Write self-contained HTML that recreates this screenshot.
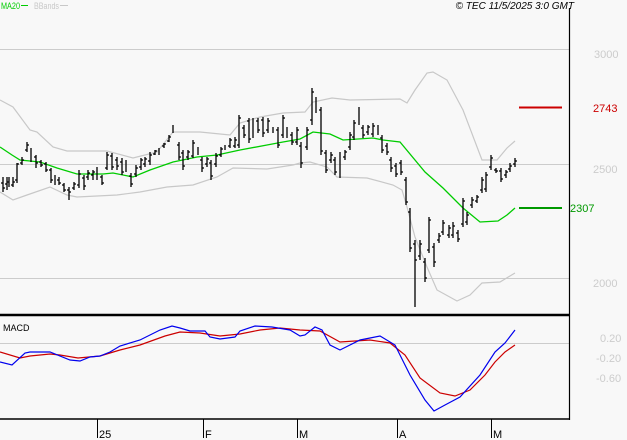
<!DOCTYPE html><html><head><meta charset="utf-8"><style>
body{margin:0;background:#f8f8f8;width:627px;height:440px;overflow:hidden;font-family:"Liberation Sans",sans-serif}
svg{display:block}
</style></head><body>
<svg width="627" height="440" viewBox="0 0 627 440" xmlns="http://www.w3.org/2000/svg">
<rect width="627" height="440" fill="#f8f8f8"/>
<g stroke="#cccccc" stroke-width="1">
<line x1="0" y1="49.5" x2="569" y2="49.5"/>
<line x1="0" y1="164.5" x2="569" y2="164.5"/>
<line x1="0" y1="278.5" x2="569" y2="278.5"/>
<line x1="0" y1="343.5" x2="569" y2="343.5"/>
</g>
<g fill="none" stroke="#c8c8c8" stroke-width="1.2">
<polyline points="0,100 13,107 30,130 37,132 53,147 67,151 107,151 133,158 157,152 173,132 200,132 230,135 240,123 260,117 283,113 305,112 313,102 332,98 350,100 400,99 407,103 415,90 427,73 433,72 447,80 463,110 482,160 497,160 507,148 515,141"/>
<polyline points="0,192 13,200 27,195 50,187 67,195 77,197 117,195 140,192 167,187 193,185 217,177 233,168 267,169 293,165 300,163 310,162 327,167 337,177 367,178 393,185 402,190 407,207 415,237 427,267 437,290 457,301 470,295 482,283 500,282 515,273"/>
</g>
<polyline fill="none" stroke="#00cc00" stroke-width="1.3" points="0,147 12,155 20,160 40,162 57,168 77,174 103,174 113,173 133,177 150,170 173,162 197,157 217,155 240,150 267,145 283,142 300,139 313,132 330,134 343,140 373,138 383,140 400,142 425,172 443,188 463,208 480,222 498,221 507,215 515,208"/>
<path fill="none" stroke="#000" stroke-width="1.3" d="
M3 177V192M1 183h2M3 188h2 M7 177V190M5 184h2M7 182h2 M9 177V187M13 177V187M11 185h2M13 182h2
M17 163V183M15 180h2M17 164h2 M22 157V165M20 163h2M22 160h2 M27 142V152M25 150h2M27 145h2 M31 148V162M36 155V168M34 157h2M36 163h2
M41 160V167M39 162h2M41 165h2 M46 162V172M44 164h2M46 170h2 M51 168V183M49 170h2M51 180h2 M55 175V185M59 177V185M57 180h2M59 183h2
M64 183V192M62 185h2M64 190h2 M69 187V200M67 190h2M69 192h2 M74 182V190M72 188h2M74 184h2 M79 170V188M77 185h2M79 174h2 M84 175V190M82 178h2M84 186h2
M88 170V180M86 177h2M88 173h2 M93 170V180M91 175h2M93 172h2 M97 167V180M102 175V185M100 177h2M102 183h2 M107 152V170M105 168h2M107 155h2
M112 153V170M110 156h2M112 167h2 M117 157V170M115 160h2M117 166h2 M122 158V175M120 162h2M122 172h2 M126 160V172M131 173V187M129 176h2M131 184h2
M136 165V177M134 174h2M136 168h2 M141 158V170M139 167h2M141 160h2 M145 157V167M143 164h2M145 159h2 M150 152V165M148 161h2M150 155h2
M155 150V155M153 154h2M155 151h2 M159 148V155M164 143V148M162 146h2M164 144h2 M169 135V142M167 141h2M169 137h2 M173 125V133M179 142V160M177 145h2M179 157h2
M183 150V170M181 153h2M183 166h2 M188 150V160M186 157h2M188 152h2 M193 140V158M191 156h2M193 143h2 M198 147V155M202 157V172M200 160h2M202 168h2
M207 157V167M205 164h2M207 159h2 M211 160V180M209 163h2M211 176h2 M216 153V167M214 164h2M216 156h2 M221 147V157M219 155h2M221 149h2
M225 145V150M230 138V148M228 146h2M230 140h2 M235 137V148M233 146h2M235 140h2 M239 115V148M237 145h2M239 118h2 M244 125V138M242 128h2M244 135h2
M249 118V143M247 121h2M249 139h2 M253 118V138M258 118V133M256 121h2M258 130h2 M263 117V137M261 120h2M263 133h2 M268 118V133M266 130h2M268 121h2
M273 127V133M278 127V148M276 130h2M278 145h2 M283 115V138M281 135h2M283 118h2 M287 127V138M292 132V145M290 135h2M292 142h2 M297 127V145M295 142h2M297 130h2
M301 142V168M299 146h2M301 163h2 M307 127V150M305 147h2M307 130h2 M312 88V125M310 120h2M312 92h2 M316 97V113M321 107V155M319 110h2M321 151h2
M326 150V173M324 153h2M326 170h2 M331 152V163M329 160h2M331 155h2 M335 157V175M333 160h2M335 172h2 M340 152V178M345 150V160M343 157h2M345 152h2
M350 132V150M348 147h2M350 135h2 M354 120V140M352 137h2M354 123h2 M359 107V125M363 125V138M361 128h2M363 135h2 M368 125V135M366 132h2M368 127h2
M373 123V137M371 134h2M373 126h2 M378 125V135M382 135V153M380 138h2M382 150h2 M387 143V155M385 146h2M387 152h2 M391 157V172M389 160h2M391 168h2
M396 163V177M394 166h2M396 174h2 M401 160V175M399 163h2M401 172h2 M406 177V205M404 180h2M406 202h2 M410 208V252M408 212h2M410 248h2
M415 240V307M413 244h2M415 260h2 M420 240V260M418 256h2M420 244h2 M425 258V282M423 262h2M425 278h2 M429 217V253M427 250h2M429 220h2
M434 243V267M432 247h2M434 262h2 M439 233V243M437 240h2M439 236h2 M443 220V235M441 232h2M443 223h2 M449 225V238M447 235h2M449 228h2
M453 222V238M451 235h2M453 226h2 M458 230V242M456 233h2M458 239h2 M463 198V227M461 224h2M463 201h2 M467 212V225M465 222h2M467 215h2
M472 197V208M470 205h2M472 200h2 M477 195V203M475 201h2M477 197h2 M482 177V193M480 190h2M482 180h2 M486 172V192M484 189h2M486 175h2
M491 155V170M489 167h2M491 158h2 M496 168V173M494 170h2M496 171h2 M501 168V182M499 171h2M501 179h2 M506 170V178M504 175h2M506 172h2
M510 163V172M508 169h2M510 166h2 M515 158V167M513 164h2M515 161h2"/>
<line x1="519" y1="107.5" x2="562" y2="107.5" stroke="#cc0000" stroke-width="2"/>
<line x1="519" y1="208" x2="562" y2="208" stroke="#009900" stroke-width="2"/>
<polyline fill="none" stroke="#cc0000" stroke-width="1.2" points="0,352 20,358 30,356 50,354 60,355 78,358 100,356 120,350 140,345 165,336 180,332 200,333 220,336 240,334 260,330 280,328 300,330 320,331 340,342 370,340 390,343 405,355 420,378 440,393 455,396 470,390 485,375 495,362 505,352 515,345"/>
<polyline fill="none" stroke="#0000ee" stroke-width="1.2" points="0,362 12,365 25,353 30,352 50,352 70,360 80,361 90,357 100,356 110,352 120,346 140,340 160,330 172,326 180,328 190,331 205,331 210,337 220,339 235,337 240,331 255,326 272,327 290,330 300,336 305,335 315,327 322,330 330,345 340,350 360,340 380,336 395,345 410,375 425,400 434,411 445,405 460,397 480,375 495,352 505,343 515,330"/>
<g stroke="#000">
<line x1="569.5" y1="8" x2="569.5" y2="420" stroke-width="1.2"/>
<line x1="0" y1="315" x2="569" y2="315" stroke-width="2.5"/>
<line x1="0" y1="419" x2="570" y2="419" stroke-width="1.5"/>
<line x1="97.5" y1="419" x2="97.5" y2="438"/>
<line x1="203.5" y1="419" x2="203.5" y2="438"/>
<line x1="297.5" y1="419" x2="297.5" y2="438"/>
<line x1="397.5" y1="419" x2="397.5" y2="438"/>
<line x1="491.5" y1="419" x2="491.5" y2="438"/>
</g>
<g font-size="11" fill="#000">
<text x="99" y="438">25</text><text x="205" y="438">F</text><text x="299" y="438">M</text><text x="399" y="438">A</text><text x="493" y="438">M</text>
</g>
<g font-size="11" fill="#cccccc">
<text x="594" y="58">3000</text><text x="593" y="173">2500</text><text x="593" y="287">2000</text>
<text x="600" y="342">0.20</text><text x="596" y="362">-0.20</text><text x="596" y="382">-0.60</text>
</g>
<text x="593" y="112" font-size="11" fill="#cc0000">2743</text>
<text x="570" y="212" font-size="11" fill="#009900">2307</text>
<text x="1" y="9" font-size="9" fill="#00cc00" textLength="19" lengthAdjust="spacingAndGlyphs">MA20</text>
<line x1="21" y1="5.5" x2="28" y2="5.5" stroke="#00cc00"/>
<text x="34" y="9" font-size="9" fill="#c8c8c8" textLength="25" lengthAdjust="spacingAndGlyphs">BBands</text>
<line x1="60" y1="5.5" x2="68" y2="5.5" stroke="#c8c8c8"/>
<text x="3" y="331" font-size="9" fill="#000">MACD</text>
<text x="574" y="9" font-size="10" font-style="italic" fill="#000" text-anchor="end">© TEC 11/5/2025 3:0 GMT</text>
</svg>
</body></html>
